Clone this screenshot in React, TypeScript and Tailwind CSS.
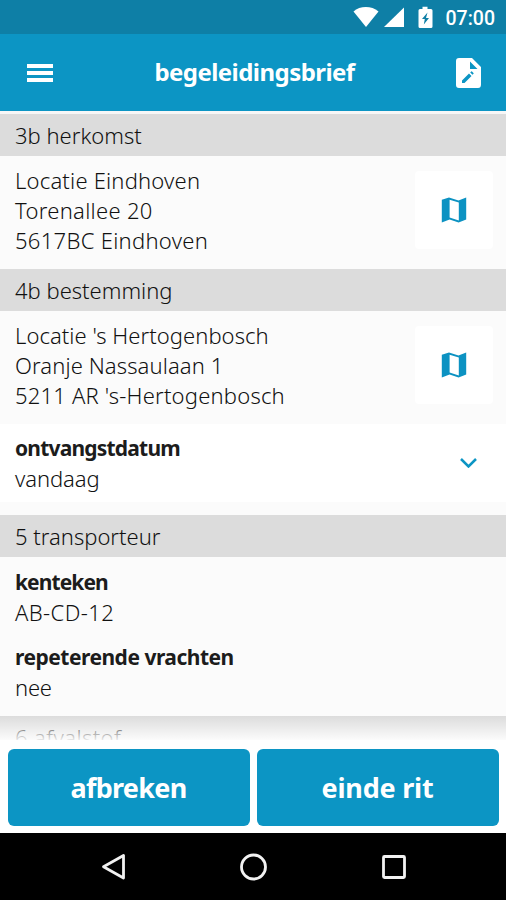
import type { ReactNode } from 'react';

function SectionTitle({ children }: { children: ReactNode }) {
  return (
    <h2 className="h-[42px] shrink-0 bg-[#dcdcdc] px-[15px] text-[22px] leading-[42px] font-light text-[#111]">
      {children}
    </h2>
  );
}

function MapButton() {
  return (
    <button className="flex h-[78px] w-[78px] items-center justify-center rounded-sm bg-white">
      <svg width="26" height="26" viewBox="0 0 26 26" fill="#0c92c2">
        <path
          fillRule="evenodd"
          d="M.8 2.800 8 .6l9.500 3L25.200.5v22L17.600 25.500l-9-3L.8 25.400zM8.600 2.800v17.600l9.200 3V5.500z"
        />
      </svg>
    </button>
  );
}

function Address({ children }: { children: ReactNode }) {
  return (
    <div className="flex h-[113px] shrink-0 items-start justify-between bg-[#fbfbfb] pr-[13px] pl-[15px]">
      <div className="pt-[9px] text-[22px] leading-[30px] font-light whitespace-nowrap">{children}</div>
      <div className="pt-[15px]">
        <MapButton />
      </div>
    </div>
  );
}

function Field({ label, labelClass, value }: { label: string; labelClass: string; value: ReactNode }) {
  return (
    <dl className="text-[22px] leading-[30px] whitespace-nowrap">
      <dt className={`text-[21px] font-bold text-[#1c1c1c] ${labelClass}`}>{label}</dt>
      <dd className="font-light">{value}</dd>
    </dl>
  );
}

export default function App() {
  return (
    <div className="flex h-[900px] w-[506px] flex-col overflow-hidden bg-white font-['Noto_Sans',sans-serif] text-[#111]">
      <div className="flex h-[34px] shrink-0 items-center justify-end bg-[#0e7fa6] pr-[11px] text-white">
        <svg width="84" height="34" viewBox="0 0 84 34" fill="currentColor">
          <path d="M.5 11.5C7 5.6 18.500 5.600 25.500 11.500L13 27z" />
          <path d="M51 7.500V27H31z" />
          <path
            fillRule="evenodd"
            d="M66 9h3.500V6.800h5V9H78q1.500 0 1.500 1.500v16q0 1.500-1.500 1.500H67q-1.500 0-1.500-1.500V10.500Q65.500 9 67 9zM74.500 12.500 69 19h2.800l-1 5.500L76 18h-3z"
          />
        </svg>
        <span className="ml-[9px] pt-[3px] font-[Roboto,sans-serif] text-[19.500px] leading-[31px] font-medium">07:00</span>
      </div>

      <header className="flex h-[77px] shrink-0 items-center justify-between bg-[#0c95c4] pr-[25px] pl-[27px] text-white">
        <button className="flex w-[26px] flex-col gap-[3px]">
          <span className="h-1 bg-white" />
          <span className="h-1 bg-white" />
          <span className="h-1 bg-white" />
        </button>
        <h1 className="pb-0.5 text-[24px] font-bold tracking-[-0.55px] whitespace-nowrap">begeleidingsbrief</h1>
        <svg width="25" height="30" viewBox="0 0 25 30" fill="white">
          <path
            fillRule="evenodd"
            d="M3 0h13L25 9V26.500Q25 30 22 30H3Q0 30 0 27V3Q0 0 3 0zM14 3.500V11H21.500zM6 22.500v2.500h2.500l7-7-2.500-2.500zM14.200 14.500l2.300 2.300 1-1q.4-.4 0-.8l-1.500-1.500q-.4-.4-.8 0z"
          />
        </svg>
      </header>

      <main className="flex h-[629px] shrink-0 flex-col overflow-hidden border-t-3 border-[#f7f7f7] bg-[#fbfbfb]">
        <SectionTitle>
          <span>3b herkomst</span>
        </SectionTitle>
        <Address>
          <p className="tracking-[0.2px]">Locatie Eindhoven</p>
          <p className="tracking-[0.3px]">Torenallee 20</p>
          <p className="tracking-[0.3px]">5617BC Eindhoven</p>
        </Address>
        <SectionTitle>
          <span>4b bestemming</span>
        </SectionTitle>
        <Address>
          <p className="tracking-[0.05px]">Locatie 's Hertogenbosch</p>
          <p className="tracking-[0.1px]">Oranje Nassaulaan 1</p>
          <p className="tracking-[0.2px]">5211 AR 's-Hertogenbosch</p>
        </Address>
        <div className="mb-[13px] flex h-[78px] shrink-0 items-center justify-between bg-white pr-[29px] pl-[15px]">
          <Field label="ontvangstdatum" labelClass="tracking-[-0.8px]" value={<span className="tracking-[-0.1px]">vandaag</span>} />
          <svg width="17" height="10" viewBox="0 0 17 10" fill="none" stroke="#0c95c4" strokeWidth="2.500">
            <path d="m1 1 7.500 7.500L16 1" />
          </svg>
        </div>
        <SectionTitle>
          <span>5 transporteur</span>
        </SectionTitle>
        <div className="flex h-[159px] shrink-0 flex-col gap-[15px] px-[15px] pt-[10px]">
          <Field label="kenteken" labelClass="tracking-[-0.9px]" value={<span className="tracking-[0.4px]">AB-CD-12</span>} />
          <Field label="repeterende vrachten" labelClass="tracking-[-0.5px]" value={<span className="tracking-[-0.2px]">nee</span>} />
        </div>
        <div className="relative">
          <SectionTitle>
            <span className="tracking-[0.4px]">6 afvalstof</span>
          </SectionTitle>
          <div className="absolute inset-x-0 top-0 h-6 bg-linear-to-b from-white/0 to-white/90" />
        </div>
      </main>

      <footer className="flex h-[93px] shrink-0 gap-[7px] bg-white px-[7.500px] pt-[9px] pb-[7px] text-[27px] font-bold text-white">
        <button className="flex-1 rounded-[6px] bg-[#0c95c4] pt-0.5 tracking-[-0.7px]">afbreken</button>
        <button className="flex-1 rounded-[6px] bg-[#0c95c4] pt-0.5 tracking-[-0.2px]">einde rit</button>
      </footer>

      <nav className="flex h-[67px] shrink-0 items-center justify-center bg-black">
        <svg width="306" height="30" viewBox="0 0 306 30" fill="none" stroke="#f2f2f2" strokeWidth="2.800">
          <path d="M23.500 3.500V26L3.500 14.800z" strokeLinejoin="round" />
          <circle cx="153.500" cy="15" r="12" />
          <rect x="283.500" y="4.500" width="21" height="21" rx="1" />
        </svg>
      </nav>
    </div>
  );
}
